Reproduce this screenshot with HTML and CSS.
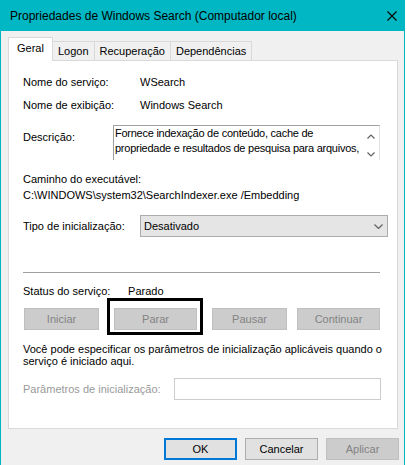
FILE: index.html
```html
<!DOCTYPE html>
<html lang="pt-BR">
  <head>
    <meta charset="UTF-8" />
    <title>Propriedades de Windows Search (Computador local)</title>
    <link rel="stylesheet" href="styles.css">
  </head>
  <body>
    <div class="window">
      <div class="titlebar">
        <span class="title">Propriedades de Windows Search (Computador local)</span>
        <svg class="close" width="10" height="10" viewBox="0 0 10 10">
          <path d="M0.5 0.5 L9.5 9.5 M9.5 0.5 L0.5 9.5" />
        </svg>
      </div>

      <div class="dialog">
        <div class="tabs">
          <div class="tab active">Geral</div>
          <div class="tab">Logon</div>
          <div class="tab">Recuperação</div>
          <div class="tab">Dependências</div>
        </div>

        <div class="panel">
          <div class="row info first">
            <span class="label">Nome do serviço:</span>
            <span>WSearch</span>
          </div>
          <div class="row info">
            <span class="label">Nome de exibição:</span>
            <span>Windows Search</span>
          </div>

          <div class="row desc-row">
            <span class="label">Descrição:</span>
            <div class="desc-box">
              <p class="desc-text">Fornece indexação de conteúdo, cache de<br />propriedade e resultados de pesquisa para arquivos,</p>
              <div class="scroll">
                <svg width="8" height="5" viewBox="0 0 8 5"><path d="M0.5 4.5 L4 1 L7.5 4.5" /></svg>
                <svg width="8" height="5" viewBox="0 0 8 5"><path d="M0.5 0.5 L4 4 L7.5 0.5" /></svg>
              </div>
            </div>
          </div>

          <div class="path">
            <p>Caminho do executável:</p>
            <p>C:\WINDOWS\system32\SearchIndexer.exe /Embedding</p>
          </div>

          <div class="row startup">
            <span class="label">Tipo de inicialização:</span>
            <div class="select">
              <span>Desativado</span>
              <svg width="9" height="5" viewBox="0 0 9 5"><path d="M0.5 0.5 L4.5 4.5 L8.5 0.5" /></svg>
            </div>
          </div>

          <hr class="sep" />

          <div class="status">
            <span class="label">Status do serviço:</span>
            <span>Parado</span>
          </div>

          <div class="svc-buttons">
            <button class="btn small" disabled>Iniciar</button>
            <button class="btn wide focused" disabled>Parar</button>
            <button class="btn small" disabled>Pausar</button>
            <button class="btn wide" disabled>Continuar</button>
          </div>

          <p class="help">Você pode especificar os parâmetros de inicialização aplicáveis quando o serviço é iniciado aqui.</p>

          <div class="row params">
            <span class="label">Parâmetros de inicialização:</span>
            <div class="input"></div>
          </div>
        </div>

        <div class="footer">
          <button class="btn action default">OK</button>
          <button class="btn action">Cancelar</button>
          <button class="btn action" disabled>Aplicar</button>
        </div>
      </div>
    </div>
  </body>
</html>
```

FILE: styles.css
```css
* {
  margin: 0;
  padding: 0;
  box-sizing: border-box;
}
body {
  background: #fff;
}

.window {
  width: 405px;
  height: 465px;
  background: #f0f0f0;
  border-left: 1px solid #00b7c3;
  border-right: 1px solid #00b7c3;
  font: 11px "Liberation Sans", Arial, sans-serif;
  color: #000;
}

.titlebar {
  height: 31px;
  background: #00b7c3;
  display: flex;
  align-items: center;
  justify-content: space-between;
  padding: 0 7px 0 9px;
}
.title {
  font: 12px "Liberation Sans", Arial, sans-serif;
}
.close path {
  stroke: #000;
  stroke-width: 1.1;
  fill: none;
}

.dialog {
  padding: 6px 0 0 7px;
}

/* tabs */
.tabs {
  display: flex;
  align-items: flex-end;
  height: 23px;
}
.tab {
  height: 19px;
  line-height: 18px;
  padding: 0 5px;
  border: 1px solid #d9d9d9;
  border-bottom: none;
  margin-left: -1px;
  background: #f0f0f0;
}
.tab.active {
  height: 24px;
  line-height: 21px;
  margin: 0 0 -1px 0;
  padding: 0 8px;
  background: #fff;
  position: relative;
  z-index: 1;
}

/* panel */
.panel {
  width: 390px;
  height: 369px;
  background: #fff;
  border: 1px solid #d9d9d9;
  padding: 0 0 0 14px;
}
.row {
  display: flex;
  align-items: center;
}
.info {
  line-height: 13px;
  margin-top: 10px;
}
.info.first {
  margin-top: 15px;
}
.info .label {
  width: 117px;
}

.desc-row {
  align-items: flex-start;
  margin-top: 13px;
}
.desc-row .label {
  width: 90px;
  padding-top: 6px;
}
.desc-box {
  width: 267px;
  height: 35px;
  display: flex;
  border-top: 1px solid #a0a0a0;
  border-left: 1px solid #a0a0a0;
  border-right: 1px solid #e3e3e3;
}
.desc-text {
  flex: 1;
  line-height: 15px;
  padding-left: 1px;
  white-space: nowrap;
  overflow: hidden;
  letter-spacing: -0.25px;
}
.scroll {
  width: 16px;
  flex: none;
  display: flex;
  flex-direction: column;
  align-items: center;
  justify-content: space-between;
  padding: 8px 0 3px;
}
.scroll path,
.select path {
  stroke: #606060;
  stroke-width: 1.2;
  fill: none;
}

.path {
  margin-top: 11px;
  line-height: 16px;
}

.startup {
  margin-top: 12px;
}
.startup .label {
  width: 117px;
}
.select {
  width: 248px;
  height: 22px;
  background: #e5e5e5;
  border: 1px solid #acacac;
  display: flex;
  align-items: center;
  justify-content: space-between;
  padding: 0 4px 0 3px;
}

.sep {
  width: 357px;
  border: none;
  border-top: 1px solid #a0a0a0;
  margin-top: 35px;
}

.status {
  margin-top: 12px;
  line-height: 13px;
}
.status .label {
  display: inline-block;
  width: 102px;
}

.svc-buttons {
  display: flex;
  margin-top: 10px;
  margin-left: 1px;
}
.btn {
  font: 11px "Liberation Sans", Arial, sans-serif;
  height: 22px;
  background: #e1e1e1;
  border: 1px solid #adadad;
  color: #000;
}
.btn:disabled {
  background: #cccccc;
  border-color: #bfbfbf;
  color: #838383;
}
.btn.small {
  width: 75px;
}
.btn.wide {
  width: 83px;
}
.svc-buttons .btn + .btn {
  margin-left: 15px;
}
.svc-buttons .btn:last-child {
  margin-left: 10px;
}
.focused {
  position: relative;
}
.focused::after {
  content: "";
  position: absolute;
  top: -11px;
  left: -8px;
  right: -7px;
  bottom: -6px;
  border: 3px solid #000;
}

.help {
  margin-top: 13px;
  line-height: 12px;
  width: 372px;
}

.params {
  margin-top: 11px;
}
.params .label {
  width: 151px;
  color: #9a9a9a;
}
.input {
  width: 207px;
  height: 22px;
  border: 1px solid #cccccc;
  background: #fff;
}

/* bottom buttons */
.footer {
  display: flex;
  justify-content: flex-end;
  gap: 8px;
  margin-top: 9px;
  padding-right: 5px;
}
.btn.action {
  width: 73px;
}
.btn.default {
  border: 2px solid #0078d7;
}
```
